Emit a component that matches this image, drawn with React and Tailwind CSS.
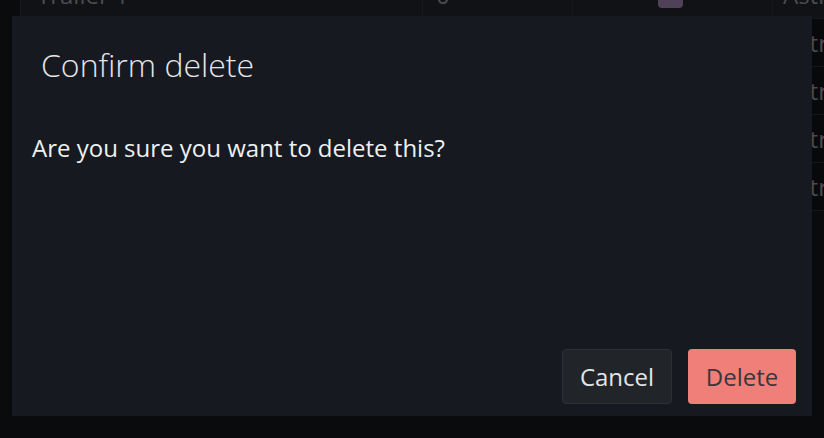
import { Check } from 'lucide-react';

const rows = [
  { name: 'Trailer 1', qty: '0', kind: 'Astra', checked: true },
  { name: 'Trailer 2', qty: '0', kind: 'Astra', checked: false },
  { name: 'Trailer 3', qty: '0', kind: 'Astra', checked: false },
  { name: 'Trailer 4', qty: '0', kind: 'Astra', checked: false },
  { name: 'Trailer 5', qty: '0', kind: 'Astra', checked: false },
];

function TableBehind() {
  return (
    <div className="-mt-[29px] pl-[20px]">
      <div className="border-l border-[#17181b]">
        {rows.map((row, i) => (
          <div
            key={i}
            className={`flex h-[48px] items-center border-b border-[#17181b] text-[24px] text-[#4a4c50] ${
              i === 0 ? 'bg-[#111216]' : 'bg-[#08090b]'
            }`}
          >
            <div className="w-[401px] shrink-0 pl-[16px]">{row.name}</div>
            <div className="flex h-full w-[150px] shrink-0 items-center border-l border-[#17181b] pl-[13px]">{row.qty}</div>
            <div className="flex h-full w-[200px] shrink-0 items-center justify-center border-l border-[#17181b]">
              {row.checked && (
                <div className="ml-[-4px] flex h-[26px] w-[25px] items-center justify-center rounded-[4px] bg-[#4f4157]">
                  <Check className="h-[16px] w-[16px] text-[#1c1820]" strokeWidth={4} />
                </div>
              )}
            </div>
            <div className="flex h-full min-w-0 flex-1 items-center border-l border-[#17181b] pl-[10px] whitespace-nowrap">
              {row.kind}
            </div>
          </div>
        ))}
      </div>
    </div>
  );
}

export default function App() {
  return (
    <div
      className="relative h-[438px] w-full overflow-hidden bg-[#0a0b0d]"
      style={{ fontFamily: '"Open Sans", "Noto Sans", sans-serif' }}
    >
      <TableBehind />

      <div className="absolute left-[12px] top-[16px] flex h-[400px] w-[800px] flex-col bg-[#161a20]">
        <h2 className="pl-[29px] pt-[25px] text-[32px] font-light leading-[48px] text-[#e4e6e8]">
          Confirm delete
        </h2>
        <p className="mt-[41px] pl-[20px] text-[24px] leading-[36px] text-[#eef0f2]">
          Are you sure you want to delete this?
        </p>
        <div className="mt-auto flex justify-end gap-[16px] pb-[12px] pr-[16px]">
          <button className="h-[55px] w-[110px] rounded-[4px] border border-[#2d3035] bg-[#212429] text-[24px] text-[#e2e4e6]">
            Cancel
          </button>
          <button className="h-[55px] w-[108px] rounded-[4px] bg-[#f07f79] text-[24px] text-[#38383a]">
            Delete
          </button>
        </div>
      </div>
    </div>
  );
}
